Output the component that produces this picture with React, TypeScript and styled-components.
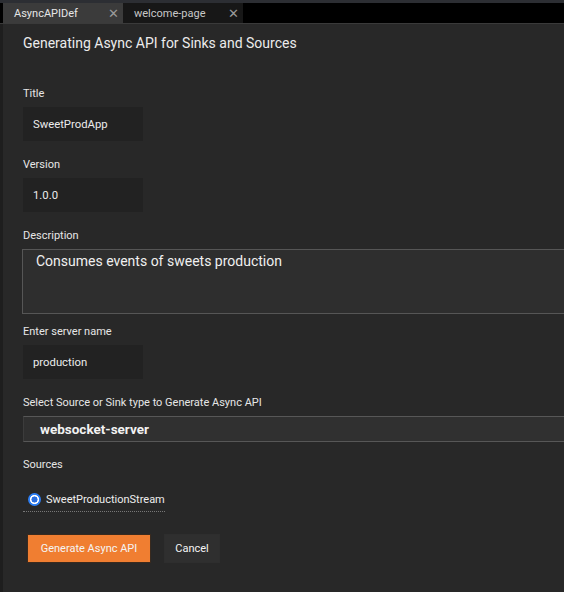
import React from "react";
import styled, { createGlobalStyle } from "styled-components";

const Global = createGlobalStyle`
  html, body { margin: 0; padding: 0; background: #282828; }
  body { font-family: Roboto, "Liberation Sans", Arial, sans-serif; overflow: hidden; }
  * { box-sizing: border-box; }
`;

const Frame = styled.div`
  width: 564px;
  height: 592px;
  display: flex;
  flex-direction: column;
  background: #282828;
  border-top: 3px solid #2c2e33;
`;

const TabBar = styled.div`
  height: 21px;
  display: flex;
  background: #000;
  padding-left: 3px;
  border-bottom: 1px solid #3a3a3a;
`;

const Tab = styled.div<{ $active?: boolean }>`
  width: 120px;
  height: 20px;
  display: flex;
  align-items: center;
  justify-content: space-between;
  padding: 0 4px 0 11px;
  background: ${(p) => (p.$active ? "#3b3b3b" : "#171717")};
  color: ${(p) => (p.$active ? "#e6e6e6" : "#c8c8c8")};
  font-size: 11px;
`;

const Close = styled.span`
  color: #9a9a9a;
  font-size: 13px;
  line-height: 1;
`;

const Body = styled.div`
  flex: 1;
  display: flex;
  border-left: 3px solid #1e1e1e;
`;

const Form = styled.div`
  flex: 1;
  display: flex;
  flex-direction: column;
  padding: 10px 0 0 20px;
  color: #e4e4e4;
`;

const Heading = styled.h1`
  margin: 0 0 35px 0;
  font-size: 14px;
  font-weight: 400;
  color: #ececec;
  line-height: 18px;
`;

const Label = styled.div`
  font-size: 11px;
  line-height: 13px;
  color: #e6e6e6;
  margin-bottom: 7px;
`;

const Field = styled.div<{ $gap?: number }>`
  margin-bottom: ${(p) => p.$gap ?? 17}px;
`;

const Input = styled.div`
  width: 120px;
  height: 34px;
  background: #222222;
  display: flex;
  align-items: center;
  padding-left: 10px;
  font-size: 11.3px;
  color: #ececec;
`;

const TextArea = styled.div`
  height: 65px;
  margin-left: -1px;
  border: 1px solid #565656;
  border-right: none;
  background: #2e2e2e;
  padding: 2px 0 0 13px;
  font-size: 14px;
  line-height: 18px;
  color: #f0f0f0;
`;

const Select = styled.div`
  height: 26px;
  border-top: 1px solid #575757;
  border-bottom: 1px solid #575757;
  border-left: 1px solid #3c3c3c;
  background: #303030;
  display: flex;
  align-items: center;
  padding-left: 16px;
  font-size: 13.5px;
  font-weight: 700;
  color: #f2f2f2;
`;

const RadioRow = styled.label`
  display: inline-flex;
  align-items: center;
  gap: 5px;
  width: 142px;
  margin-top: 15px;
  padding: 0 0 4px 5px;
  border-bottom: 1px dotted #777;
  font-size: 11px;
  line-height: 14px;
  color: #eeeeee;
`;

const RadioDot = styled.span`
  flex-shrink: 0;
  width: 13px;
  height: 13px;
  margin-top: -2px;
  border-radius: 50%;
  background: radial-gradient(circle, #2a6fe0 0 2.8px, #ffffff 3.3px 4.3px, #2d7ff5 4.8px);
  display: inline-block;
`;

const Actions = styled.div`
  display: flex;
  gap: 13px;
  margin-top: 22px;
  padding-left: 4px;
`;

const Button = styled.button<{ $primary?: boolean }>`
  height: 29px;
  width: ${(p) => (p.$primary ? 124 : 56)}px;
  padding: 0;
  font-family: inherit;
  font-size: 11px;
  color: #f4f4f4;
  border: 1px solid ${(p) => (p.$primary ? "#3a2a1e" : "#2e2e2e")};
  background: ${(p) => (p.$primary ? "#f07e31" : "#2f2f2f")};
  cursor: pointer;
`;

export default function App() {
  return (
    <>
      <Global />
      <Frame>
        <TabBar>
          <Tab $active>
            <span>AsyncAPIDef</span>
            <Close>✕</Close>
          </Tab>
          <Tab>
            <span>welcome-page</span>
            <Close>✕</Close>
          </Tab>
        </TabBar>
        <Body>
          <Form>
            <Heading>Generating Async API for Sinks and Sources</Heading>
            <Field>
              <Label>Title</Label>
              <Input>SweetProdApp</Input>
            </Field>
            <Field>
              <Label>Version</Label>
              <Input>1.0.0</Input>
            </Field>
            <Field $gap={11}>
              <Label>Description</Label>
              <TextArea>Consumes events of sweets production</TextArea>
            </Field>
            <Field>
              <Label>Enter server name</Label>
              <Input>production</Input>
            </Field>
            <Field $gap={16}>
              <Label>Select Source or Sink type to Generate Async API</Label>
              <Select>websocket-server</Select>
            </Field>
            <Label>Sources</Label>
            <div>
              <RadioRow>
                <RadioDot />
                SweetProductionStream
              </RadioRow>
            </div>
            <Actions>
              <Button $primary>Generate Async API</Button>
              <Button>Cancel</Button>
            </Actions>
          </Form>
        </Body>
      </Frame>
    </>
  );
}
